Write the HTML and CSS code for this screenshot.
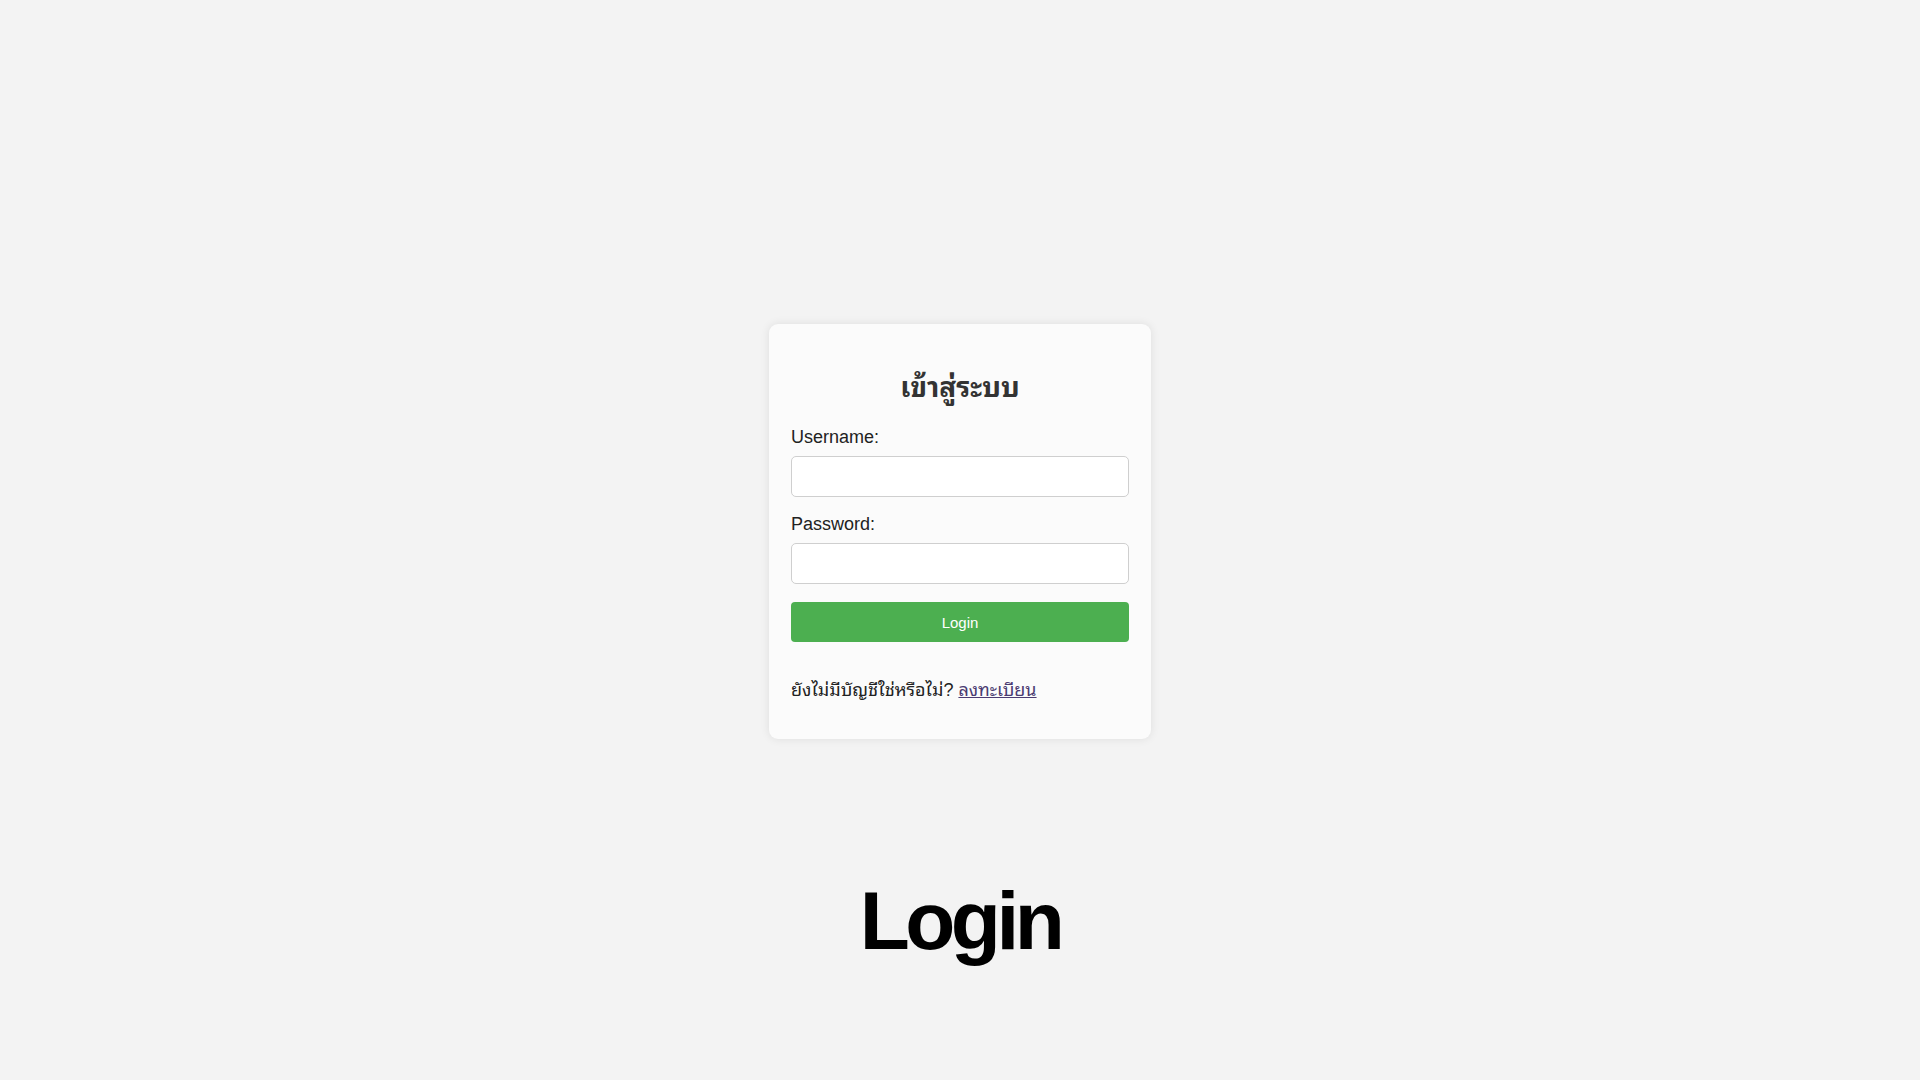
FILE: index.html
```html
<!DOCTYPE html>
<html lang="th">
<head>
<meta charset="utf-8">
<title>เข้าสู่ระบบ</title>
<link rel="stylesheet" href="styles.css">
</head>
<body>
<div class="page">
  <div class="card">
    <h2 class="title">เข้าสู่ระบบ</h2>
    <form class="form">
      <label class="label" for="username">Username:</label>
      <input class="input" id="username" type="text">
      <label class="label" for="password">Password:</label>
      <input class="input" id="password" type="password">
      <button class="btn" type="button">Login</button>
    </form>
    <p class="note">ยังไม่มีบัญชีใช่หรือไม่? <a class="link" href="#">ลงทะเบียน</a></p>
  </div>
  <div class="caption">Login</div>
</div>
</body>
</html>
```

FILE: styles.css
```css
html, body {
  margin: 0;
  padding: 0;
}
body {
  background: #f3f3f3;
  font-family: "Liberation Sans", "Noto Sans Thai Looped", "Loma", "Garuda", "Waree", "Tlwg Typo", "Noto Sans Thai", "Noto Sans", sans-serif;
  color: #222;
}
.page {
  width: 1920px;
  height: 1080px;
  display: flex;
  flex-direction: column;
  align-items: center;
  padding-top: 324px;
  box-sizing: border-box;
}
.card {
  width: 338px;
  padding: 22px 22px 22px;
  background: #fbfbfb;
  border-radius: 9px;
  box-shadow: 0 0 10px rgba(0, 0, 0, 0.09);
}
.title {
  margin: 26px 0 22px;
  font-size: 28px;
  line-height: 32px;
  text-align: center;
  font-weight: bold;
  color: #333;
}
.form {
  display: flex;
  flex-direction: column;
}
.label {
  font-size: 18px;
  line-height: 22px;
  color: #222;
}
.input {
  margin: 8px 0 16px;
  height: 41px;
  box-sizing: border-box;
  border: 1px solid #cfcfcf;
  border-radius: 5px;
  background: #fff;
  padding: 0 8px;
}
#password {
  margin-bottom: 18px;
}
.btn {
  height: 40px;
  border: none;
  border-radius: 4px;
  background: #4caf50;
  color: #fff;
  font-family: "Liberation Sans", Arial, sans-serif;
  font-size: 15px;
}
.note {
  margin: 37px 0 16px;
  font-size: 18px;
  line-height: 22px;
  color: #222;
}
.link {
  color: #4b3b72;
}
.caption {
  margin-top: 132px;
  font-family: "Liberation Sans", Arial, sans-serif;
  font-weight: 700;
  font-size: 82px;
  line-height: 100px;
  letter-spacing: -0.055em;
  color: #000;
}
```
